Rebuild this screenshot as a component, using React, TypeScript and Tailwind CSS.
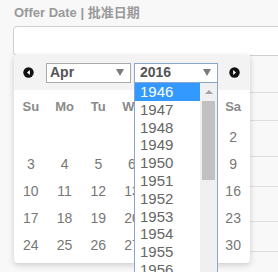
import React from "react";

const dayNames = ["Su", "Mo", "Tu", "We", "Th", "Fr", "Sa"];

const weeks: (number | null)[][] = [
  [null, null, null, null, null, 1, 2],
  [3, 4, 5, 6, 7, 8, 9],
  [10, 11, 12, 13, 14, 15, 16],
  [17, 18, 19, 20, 21, 22, 23],
  [24, 25, 26, 27, 28, 29, 30],
];

const years = Array.from({ length: 11 }, (_, i) => 1946 + i);

function NavIcon({ dir }: { dir: "left" | "right" }) {
  return (
    <svg width="11" height="11" viewBox="0 0 11 11">
      <circle cx="5.5" cy="5.5" r="5.2" fill="#111" />
      {dir === "left" ? (
        <polygon points="6.9,3 6.9,8 4,5.5" fill="#fff" />
      ) : (
        <polygon points="4.1,3 4.1,8 7,5.5" fill="#fff" />
      )}
    </svg>
  );
}

function Caret() {
  return <span className="w-0 h-0 border-l-[4px] border-r-[4px] border-t-[7px] border-l-transparent border-r-transparent border-t-[#7a7a7a]" />;
}

export default function App() {
  const rowHeights = ["h-[37px]", "h-[28px]", "h-[36px]", "h-[30px]", "h-[35px]", "h-[30px]"];

  return (
    <div className="relative w-[278px] h-[272px] overflow-hidden bg-[#f8f8f8] font-['Liberation_Sans','Noto_Sans_CJK_SC',sans-serif]">
      <div className="h-[26px] pl-[14px] pt-[5px] text-[13px] font-bold text-[#9a9a9a] leading-[15px]">
        Offer Date | 批准日期
      </div>
      <div className="ml-[13px] w-[300px] h-[30px] bg-white border border-[#cfcfcf] rounded-[4px]" />

      {/* form rows behind the picker */}
      <div className="ml-[14px]">
        {rowHeights.map((h, i) => (
          <div key={i} className={`${h} border-b border-[#dedede]`} />
        ))}
      </div>

      {/* datepicker */}
      <div className="absolute left-[14px] top-[55px] w-[236px] h-[208px] bg-white rounded-b-[4px] shadow-[0_2px_6px_rgba(0,0,0,0.18)]">
        <div className="h-[35px] bg-[#f3f3f3] flex items-center pl-[9px]">
          <NavIcon dir="left" />
          <div className="ml-[12px] w-[85px] h-[20px] border border-[#aaa] bg-white flex items-center justify-between pl-[3px] pr-[6px]">
            <span className="text-[14px] font-bold text-[#555]">Apr</span>
            <Caret />
          </div>
          <div className="ml-[3px] w-[84px] h-[20px] border border-[#8aa6cc] bg-white flex items-center justify-between pl-[5px] pr-[6px]">
            <span className="text-[14px] font-bold text-[#555]">2016</span>
            <Caret />
          </div>
          <div className="ml-[11px]">
            <NavIcon dir="right" />
          </div>
        </div>
        <div className="grid grid-cols-7 h-[34px] items-center">
          {dayNames.map((d) => (
            <div key={d} className="text-center text-[13px] font-bold text-[#8a8a8a]">
              {d}
            </div>
          ))}
        </div>
        {weeks.map((w, i) => (
          <div key={i} className="grid grid-cols-7 h-[27px] items-center">
            {w.map((d, j) => (
              <div key={j} className="text-center text-[14px] text-[#777]">
                {d ?? ""}
              </div>
            ))}
          </div>
        ))}
      </div>

      {/* year dropdown list */}
      <div className="absolute left-[134px] top-[82px] w-[84px] h-[200px] bg-white border border-[#8aa6cc] flex">
        <div className="flex-1">
          {years.map((y, i) => (
            <div
              key={y}
              className={`h-[17.8px] leading-[17.8px] pl-[5px] text-[15px] ${
                i === 0 ? "bg-[#3399ff] text-white" : "text-[#666]"
              }`}
            >
              {y}
            </div>
          ))}
        </div>
        <div className="w-[17px] bg-[#f0f0f0] flex flex-col items-center">
          <div className="h-[18px] flex items-center justify-center">
            <span className="w-0 h-0 border-l-[4px] border-r-[4px] border-b-[4px] border-l-transparent border-r-transparent border-b-[#a3a3a3]" />
          </div>
          <div className="w-[13px] h-[79px] bg-[#c1c1c1]" />
        </div>
      </div>
    </div>
  );
}
